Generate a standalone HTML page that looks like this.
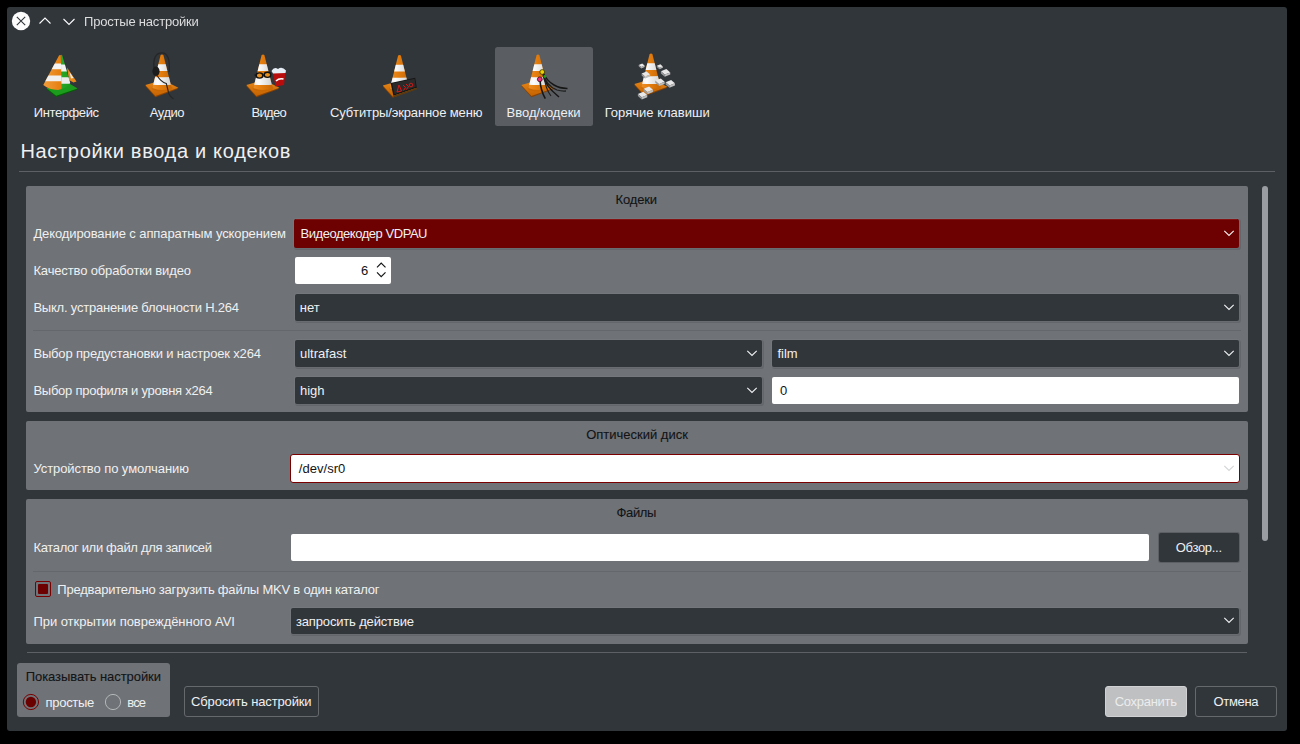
<!DOCTYPE html>
<html><head><meta charset="utf-8"><style>
html,body{margin:0;padding:0;width:1300px;height:744px;overflow:hidden;background:#000;}
.b{position:absolute;}
.t{position:absolute;white-space:pre;font-family:"Liberation Sans",sans-serif;}
</style></head><body>
<div class="b" style="left:7px;top:7px;width:1280px;height:724px;background:#31363b;border-radius:3px;"></div><svg class="b" style="left:0;top:0" width="90" height="40" viewBox="0 0 90 40">
<circle cx="21" cy="21" r="9.2" fill="#fcfcfc"/>
<path d="M16.8 16.8 L25.2 25.2 M25.2 16.8 L16.8 25.2" stroke="#31363b" stroke-width="1.1"/>
<path d="M39.5 23.5 L45 18 L50.5 23.5" stroke="#fcfcfc" stroke-width="1.1" fill="none"/>
<path d="M63.5 19 L69 24.5 L74.5 19" stroke="#fcfcfc" stroke-width="1.1" fill="none"/>
</svg><div class="b" style="left:495px;top:47px;width:98px;height:79px;background:#5a5d62;border-radius:2.5px;"></div><div class="b" style="left:19px;top:171px;width:1256px;height:1px;background:#5d6165;border-radius:0px;"></div><div class="b" style="left:26px;top:186px;width:1222px;height:226px;background:#6f7276;border-radius:2px;"></div><div class="b" style="left:26px;top:421px;width:1222px;height:69px;background:#6f7276;border-radius:2px;"></div><div class="b" style="left:26px;top:499px;width:1222px;height:145px;background:#6f7276;border-radius:2px;"></div><div class="b" style="left:1262px;top:186px;width:6px;height:355px;background:#9a9ea2;border-radius:3px;"></div><div class="b" style="left:294px;top:219px;width:945px;height:29px;background:#6d0000;border-radius:2px;box-shadow:0 0 0 1px rgba(255,255,255,0.04), 1px 1px 0 1px rgba(40,44,48,0.16)"></div><svg class="b" style="left:1221.5px;top:227.7px" width="14" height="10" viewBox="0 0 14 10"><path d="M2.3 2.8 L7 7.4 L11.7 2.8" stroke="#eff0f1" stroke-width="1.15" fill="none"/></svg><div class="b" style="left:296px;top:219px;width:941px;height:1px;background:rgba(160,40,40,0.45);border-radius:0px;"></div><div class="b" style="left:295px;top:257px;width:96px;height:27px;background:#ffffff;border-radius:2px;"></div><svg class="b" style="left:374px;top:259px" width="14" height="22" viewBox="0 0 14 22"><path d="M3 8.3 L7.2 4 L11.5 8.3 M3 13.3 L7.2 17.6 L11.5 13.3" stroke="#141618" stroke-width="1.2" fill="none"/></svg><div class="b" style="left:295px;top:294px;width:944px;height:27px;background:#31363b;border-radius:2px;box-shadow:0 0 0 1px rgba(255,255,255,0.04), 1px 1px 0 1px rgba(40,44,48,0.16)"></div><svg class="b" style="left:1221.5px;top:301.7px" width="14" height="10" viewBox="0 0 14 10"><path d="M2.3 2.8 L7 7.4 L11.7 2.8" stroke="#eff0f1" stroke-width="1.15" fill="none"/></svg><div class="b" style="left:33px;top:330px;width:1208px;height:1px;background:#64676b;border-radius:0px;"></div><div class="b" style="left:295px;top:340px;width:467px;height:27px;background:#31363b;border-radius:2px;box-shadow:0 0 0 1px rgba(255,255,255,0.04), 1px 1px 0 1px rgba(40,44,48,0.16)"></div><svg class="b" style="left:744.5px;top:347.7px" width="14" height="10" viewBox="0 0 14 10"><path d="M2.3 2.8 L7 7.4 L11.7 2.8" stroke="#eff0f1" stroke-width="1.15" fill="none"/></svg><div class="b" style="left:772px;top:340px;width:467px;height:27px;background:#31363b;border-radius:2px;box-shadow:0 0 0 1px rgba(255,255,255,0.04), 1px 1px 0 1px rgba(40,44,48,0.16)"></div><svg class="b" style="left:1221.5px;top:347.7px" width="14" height="10" viewBox="0 0 14 10"><path d="M2.3 2.8 L7 7.4 L11.7 2.8" stroke="#eff0f1" stroke-width="1.15" fill="none"/></svg><div class="b" style="left:295px;top:377px;width:467px;height:27px;background:#31363b;border-radius:2px;box-shadow:0 0 0 1px rgba(255,255,255,0.04), 1px 1px 0 1px rgba(40,44,48,0.16)"></div><svg class="b" style="left:744.5px;top:384.7px" width="14" height="10" viewBox="0 0 14 10"><path d="M2.3 2.8 L7 7.4 L11.7 2.8" stroke="#eff0f1" stroke-width="1.15" fill="none"/></svg><div class="b" style="left:772px;top:377px;width:467px;height:27px;background:#ffffff;border-radius:2px;"></div><div class="b" style="left:290px;top:454px;width:950px;height:29px;background:#ffffff;border-radius:3px;box-sizing:border-box;border:1px solid #7a0000"></div><svg class="b" style="left:1222px;top:462.5px" width="14" height="10" viewBox="0 0 14 10"><path d="M2.3 2.8 L7 7.4 L11.7 2.8" stroke="#d4d5d6" stroke-width="1.15" fill="none"/></svg><div class="b" style="left:291px;top:534px;width:858px;height:27px;background:#ffffff;border-radius:2px;"></div><div class="b" style="left:1159px;top:533px;width:80px;height:29px;background:#31363b;border-radius:2px;box-shadow:0 0 0 1px rgba(49,54,59,0.3)"></div><div class="b" style="left:33px;top:571px;width:1208px;height:1px;background:#64676b;border-radius:0px;"></div><div class="b" style="left:35px;top:581px;width:16px;height:16px;background:transparent;border-radius:2px;box-sizing:border-box;border:1px solid #7a0000"></div><div class="b" style="left:38px;top:584px;width:10px;height:10px;background:#6d0000;border-radius:1px;"></div><div class="b" style="left:291px;top:608px;width:948px;height:26px;background:#31363b;border-radius:2px;box-shadow:0 0 0 1px rgba(255,255,255,0.04), 1px 1px 0 1px rgba(40,44,48,0.16)"></div><svg class="b" style="left:1221.5px;top:615.2px" width="14" height="10" viewBox="0 0 14 10"><path d="M2.3 2.8 L7 7.4 L11.7 2.8" stroke="#eff0f1" stroke-width="1.15" fill="none"/></svg><div class="b" style="left:27px;top:652px;width:1220px;height:1px;background:#5d6165;border-radius:0px;"></div><div class="b" style="left:17px;top:663px;width:153px;height:54px;background:#6f7276;border-radius:3px;"></div><svg class="b" style="left:20px;top:692px" width="110" height="20" viewBox="0 0 110 20"><circle cx="10.9" cy="10" r="7.6" fill="none" stroke="#7a0000" stroke-width="1"/><circle cx="10.9" cy="10" r="5.2" fill="#6b0000"/><circle cx="93" cy="10" r="7.6" fill="none" stroke="#b4b6b8" stroke-width="1"/></svg><div class="b" style="left:184px;top:686px;width:135px;height:31px;background:#31363b;border-radius:3px;box-sizing:border-box;border:1px solid #66696c"></div><div class="b" style="left:1105px;top:686px;width:82px;height:31px;background:#bfc0c1;border-radius:3px;box-sizing:border-box;border:1px solid #d0d1d2"></div><div class="b" style="left:1195px;top:686px;width:82px;height:31px;background:#31363b;border-radius:3px;box-sizing:border-box;border:1px solid #66696c"></div><svg width="0" height="0" style="position:absolute">
<defs>
<linearGradient id="og" x1="0" y1="0" x2="1" y2="0">
<stop offset="0" stop-color="#f2a040"/><stop offset="0.4" stop-color="#e57e0e"/><stop offset="1" stop-color="#a65000"/>
</linearGradient>
<linearGradient id="wg" x1="0" y1="0" x2="1" y2="0">
<stop offset="0" stop-color="#e0e0e0"/><stop offset="0.35" stop-color="#fbfbfb"/><stop offset="1" stop-color="#a8a8a8"/>
</linearGradient>
<linearGradient id="bg" x1="0" y1="0" x2="0" y2="1">
<stop offset="0" stop-color="#e88a1c"/><stop offset="1" stop-color="#c46200"/>
</linearGradient>
<linearGradient id="gg" x1="0" y1="0" x2="1" y2="0">
<stop offset="0" stop-color="#40c040"/><stop offset="1" stop-color="#088008"/>
</linearGradient>
<clipPath id="cc"><path d="M16.6 3 Q18 1.8 19.4 3 L27.6 36 Q18 40 8.4 36 Z"/></clipPath>
</defs>
<g id="cone">
<path d="M1.3 34 L19 29 L34.4 36.7 L11.4 45.3 Z" fill="#8a4200"/>
<path d="M1.3 33 L19 28 L34.4 35.7 L11.4 44 Z" fill="url(#bg)"/>
<ellipse cx="18" cy="36" rx="10.5" ry="3.6" fill="#c56400" opacity="0.55"/>
<g clip-path="url(#cc)">
<rect x="0" y="0" width="40" height="44" fill="url(#og)"/>
<path d="M0 11.5 Q18 13 40 11.5 L40 18.3 Q18 19.8 0 18.3 Z" fill="url(#wg)"/>
<path d="M0 24.5 Q18 26 40 24.5 L40 32 Q18 34 0 32 Z" fill="url(#wg)"/>
</g>
</g>
</svg>
<svg class="b" style="left:42.4px;top:52px" width="48" height="48" viewBox="0 0 48 48"><defs><clipPath id="gc"><path d="M18.6 3 Q19.5 2.2 20.2 3.2 L28.2 31 Q25 36.5 18.6 36.5 Z"/></clipPath>
<clipPath id="oc"><path d="M18.8 3.2 Q17.8 2.6 17 3.6 L1.3 33 Q7 37.8 16 38 L19.6 37 Z"/></clipPath></defs>
<path d="M25 15.5 L34.5 29.5 L31.5 30.5 L27 28 Z" fill="#e8891c"/>
<path d="M27.5 20 L31.5 26 L29 26.5 Z" fill="#f0f0f0"/>
<path d="M4.6 37.3 L24 30.5 L35.6 37.5 L14.2 45 Z" fill="#045f04"/>
<path d="M4.6 36.3 L24 29.5 L35.6 36.5 L14.2 43.8 Z" fill="#1c9c1c"/>
<g clip-path="url(#gc)"><rect x="0" y="0" width="48" height="48" fill="url(#gg)"/>
<path d="M0 12.4 L48 12.4 L48 19.6 L0 19.6 Z" fill="#f2f2f2"/>
<path d="M0 25.3 L48 25.3 L48 31.7 L0 31.7 Z" fill="#ececec"/></g>
<g clip-path="url(#oc)"><rect x="0" y="0" width="48" height="48" fill="url(#og)"/>
<path d="M0 11.5 L48 11.5 L48 17.2 L0 17.2 Z" fill="#f4f4f4"/>
<path d="M0 23.6 L48 23.6 L48 29.3 L0 29.3 Z" fill="#f0f0f0"/></g></svg>
<svg class="b" style="left:143.2px;top:52px" width="48" height="48" viewBox="0 0 48 48"><use href="#cone" transform="translate(1,0)"/><path d="M11 17 Q9.5 0.8 19 0.8 Q27.5 0.8 26.2 20" stroke="#262626" stroke-width="1.3" fill="none"/>
<ellipse cx="13" cy="19.3" rx="3.6" ry="4.8" fill="#1c1c1c"/>
<path d="M14 23.5 Q18 30 23.3 31.5 Q24.5 36 25.7 41.4 Q27.5 45 30.5 47" stroke="#262626" stroke-width="1.1" fill="none"/></svg>
<svg class="b" style="left:245.0px;top:52px" width="48" height="48" viewBox="0 0 48 48"><use href="#cone" transform="translate(0,0)"/><path d="M28 21 L40.5 20 L39 33 L30.5 34.5 Z" fill="#b80c0c"/>
<path d="M26.5 19 Q29 14.5 33 17 Q37 14 41 18.5 L40.5 21 L28 21.5 Z" fill="#e6edf5"/>
<path d="M31 29 Q34 26 38.5 27" stroke="#ffffff" stroke-width="1.6" fill="none"/>
<ellipse cx="14.5" cy="23.5" rx="3.3" ry="2.6" fill="#e89020" stroke="#111" stroke-width="1.4"/>
<ellipse cx="22.5" cy="22.8" rx="3.3" ry="2.6" fill="#e89020" stroke="#111" stroke-width="1.4"/>
<path d="M9.5 23 L11.3 23.3 M17.8 23.3 L19.2 23" stroke="#111" stroke-width="1.1"/></svg>
<svg class="b" style="left:382.0px;top:52px" width="48" height="48" viewBox="0 0 48 48"><use href="#cone" transform="translate(-0.5,0.5)"/><path d="M8.6 31 L33.2 25.7 L34.8 35.7 L11.4 43.8 Z" fill="#151515"/>
<path d="M11.4 43.8 L34.8 35.7 L35 37.2 L11.8 45.3 Z" fill="#5a3a10"/>
<path d="M10 31.6 L32.6 26.8 L33.8 34.8 L12.4 42.2 Z" fill="#2a2a2a"/>
<path d="M15 40 L17 33 L19.5 39 Z M21 33 L23.5 35.5 L21.5 38.5 M24 32 L26.5 34.5 L24.5 37.5" stroke="#d81818" stroke-width="1" fill="none"/>
<circle cx="29" cy="33" r="1.8" stroke="#d81818" stroke-width="0.9" fill="none"/></svg>
<svg class="b" style="left:519.5px;top:52px" width="48" height="48" viewBox="0 0 48 48"><use href="#cone" transform="translate(0,0)"/><path d="M23 21 Q27 29 34 33 Q40 36.5 47.5 36.4" stroke="#161616" stroke-width="1.5" fill="none"/>
<path d="M23.5 21.5 Q26 34 37 38 Q42 39.5 46 39" stroke="#202020" stroke-width="1.3" fill="none"/>
<path d="M23 22 Q24 33 39 45" stroke="#161616" stroke-width="1.6" fill="none"/>
<path d="M20 28 Q20.5 38 25.3 46.7" stroke="#161616" stroke-width="1.6" fill="none"/>
<path d="M24.5 25 Q25 36 31 44" stroke="#202020" stroke-width="1.2" fill="none"/>
<circle cx="22.2" cy="20" r="2.4" fill="#f0d000" stroke="#3a3a00" stroke-width="0.8"/>
<circle cx="19.8" cy="27.3" r="2.4" fill="#e83078" stroke="#3a0010" stroke-width="0.8"/>
<circle cx="24.8" cy="24.5" r="1.4" fill="#20a020"/></svg>
<svg class="b" style="left:633.0px;top:52px" width="48" height="48" viewBox="0 0 48 48"><use href="#cone" transform="translate(0,-1)"/><g><g transform="translate(8.5,13.6) scale(0.7)"><path d="M-4 -1 L1 -3 L4.5 0 L-0.5 2 Z" fill="#e8e8e8"/><path d="M-4 -1 L-0.5 2 L-0.5 4 L-4 1 Z" fill="#9c9c9c"/><path d="M-0.5 2 L4.5 0 L4.5 2 L-0.5 4 Z" fill="#bdbdbd"/></g><g transform="translate(26.7,14.4) scale(0.7)"><path d="M-4 -1 L1 -3 L4.5 0 L-0.5 2 Z" fill="#e8e8e8"/><path d="M-4 -1 L-0.5 2 L-0.5 4 L-4 1 Z" fill="#9c9c9c"/><path d="M-0.5 2 L4.5 0 L4.5 2 L-0.5 4 Z" fill="#bdbdbd"/></g><g transform="translate(32.3,20.4) scale(1.1)"><path d="M-4 -1 L1 -3 L4.5 0 L-0.5 2 Z" fill="#e8e8e8"/><path d="M-4 -1 L-0.5 2 L-0.5 4 L-4 1 Z" fill="#9c9c9c"/><path d="M-0.5 2 L4.5 0 L4.5 2 L-0.5 4 Z" fill="#bdbdbd"/></g><g transform="translate(12.6,22.4) scale(1)"><path d="M-4 -1 L1 -3 L4.5 0 L-0.5 2 Z" fill="#e8e8e8"/><path d="M-4 -1 L-0.5 2 L-0.5 4 L-4 1 Z" fill="#9c9c9c"/><path d="M-0.5 2 L4.5 0 L4.5 2 L-0.5 4 Z" fill="#bdbdbd"/></g><g transform="translate(26.7,29.7) scale(1.1)"><path d="M-4 -1 L1 -3 L4.5 0 L-0.5 2 Z" fill="#e8e8e8"/><path d="M-4 -1 L-0.5 2 L-0.5 4 L-4 1 Z" fill="#9c9c9c"/><path d="M-0.5 2 L4.5 0 L4.5 2 L-0.5 4 Z" fill="#bdbdbd"/></g><g transform="translate(37,31.3) scale(1.1)"><path d="M-4 -1 L1 -3 L4.5 0 L-0.5 2 Z" fill="#e8e8e8"/><path d="M-4 -1 L-0.5 2 L-0.5 4 L-4 1 Z" fill="#9c9c9c"/><path d="M-0.5 2 L4.5 0 L4.5 2 L-0.5 4 Z" fill="#bdbdbd"/></g><g transform="translate(15,37.8) scale(1.1)"><path d="M-4 -1 L1 -3 L4.5 0 L-0.5 2 Z" fill="#e8e8e8"/><path d="M-4 -1 L-0.5 2 L-0.5 4 L-4 1 Z" fill="#9c9c9c"/><path d="M-0.5 2 L4.5 0 L4.5 2 L-0.5 4 Z" fill="#bdbdbd"/></g><g transform="translate(9.3,43) scale(1.1)"><path d="M-4 -1 L1 -3 L4.5 0 L-0.5 2 Z" fill="#e8e8e8"/><path d="M-4 -1 L-0.5 2 L-0.5 4 L-4 1 Z" fill="#9c9c9c"/><path d="M-0.5 2 L4.5 0 L4.5 2 L-0.5 4 Z" fill="#bdbdbd"/></g></g></svg><div class="t" style="left:83.6px;top:15.20px;font-size:13px;line-height:13px;color:#dcdddd;letter-spacing:-0.199px;will-change:transform;">Простые настройки</div><div class="t" style="left:33.8px;top:106.00px;font-size:13px;line-height:13px;color:#eff0f1;letter-spacing:-0.411px;">Интерфейс</div><div class="t" style="left:149.8px;top:106.00px;font-size:13px;line-height:13px;color:#eff0f1;letter-spacing:-0.468px;">Аудио</div><div class="t" style="left:251.4px;top:106.00px;font-size:13px;line-height:13px;color:#eff0f1;letter-spacing:-0.646px;">Видео</div><div class="t" style="left:330.0px;top:106.00px;font-size:13px;line-height:13px;color:#eff0f1;letter-spacing:-0.126px;">Субтитры/экранное меню</div><div class="t" style="left:506.6px;top:106.00px;font-size:13px;line-height:13px;color:#eff0f1;letter-spacing:-0.013px;">Ввод/кодеки</div><div class="t" style="left:604.7px;top:106.00px;font-size:13px;line-height:13px;color:#eff0f1;letter-spacing:0.006px;">Горячие клавиши</div><div class="t" style="left:20.4px;top:141.07px;font-size:20px;line-height:20px;color:#eff0f1;letter-spacing:0.684px;">Настройки ввода и кодеков</div><div class="t" style="left:615.5px;top:193.00px;font-size:13px;line-height:13px;color:#121416;letter-spacing:-0.159px;-webkit-text-stroke:0.1px #121416;">Кодеки</div><div class="t" style="left:586.2px;top:428.00px;font-size:13px;line-height:13px;color:#121416;letter-spacing:-0.002px;-webkit-text-stroke:0.1px #121416;">Оптический диск</div><div class="t" style="left:616.6px;top:506.00px;font-size:13px;line-height:13px;color:#121416;letter-spacing:-0.378px;-webkit-text-stroke:0.1px #121416;">Файлы</div><div class="t" style="left:33.4px;top:226.50px;font-size:13px;line-height:13px;color:#eff0f1;letter-spacing:-0.101px;">Декодирование с аппаратным ускорением</div><div class="t" style="left:33.4px;top:264.40px;font-size:13px;line-height:13px;color:#eff0f1;letter-spacing:-0.141px;">Качество обработки видео</div><div class="t" style="left:33.4px;top:300.50px;font-size:13px;line-height:13px;color:#eff0f1;letter-spacing:-0.218px;">Выкл. устранение блочности H.264</div><div class="t" style="left:33.4px;top:347.40px;font-size:13px;line-height:13px;color:#eff0f1;letter-spacing:-0.160px;">Выбор предустановки и настроек x264</div><div class="t" style="left:33.4px;top:384.30px;font-size:13px;line-height:13px;color:#eff0f1;letter-spacing:-0.252px;">Выбор профиля и уровня x264</div><div class="t" style="left:33.4px;top:462.00px;font-size:13px;line-height:13px;color:#eff0f1;letter-spacing:-0.074px;">Устройство по умолчанию</div><div class="t" style="left:33.4px;top:541.00px;font-size:13px;line-height:13px;color:#eff0f1;letter-spacing:-0.322px;">Каталог или файл для записей</div><div class="t" style="left:57.3px;top:582.50px;font-size:13px;line-height:13px;color:#eff0f1;letter-spacing:-0.203px;">Предварительно загрузить файлы MKV в один каталог</div><div class="t" style="left:33.4px;top:615.00px;font-size:13px;line-height:13px;color:#eff0f1;letter-spacing:-0.034px;">При открытии повреждённого AVI</div><div class="t" style="left:300.5px;top:227.00px;font-size:13px;line-height:13px;color:#eff0f1;letter-spacing:-0.458px;">Видеодекодер VDPAU</div><div class="t" style="left:361.0px;top:263.60px;font-size:13px;line-height:13px;color:#101214;letter-spacing:0.000px;">6</div><div class="t" style="left:299.8px;top:301.00px;font-size:13px;line-height:13px;color:#eff0f1;letter-spacing:0.000px;">нет</div><div class="t" style="left:300.0px;top:346.60px;font-size:13px;line-height:13px;color:#eff0f1;letter-spacing:0.000px;">ultrafast</div><div class="t" style="left:300.0px;top:383.60px;font-size:13px;line-height:13px;color:#eff0f1;letter-spacing:0.000px;">high</div><div class="t" style="left:777.4px;top:346.60px;font-size:13px;line-height:13px;color:#eff0f1;letter-spacing:0.000px;">film</div><div class="t" style="left:780.0px;top:383.60px;font-size:13px;line-height:13px;color:#121416;letter-spacing:0.000px;">0</div><div class="t" style="left:298.8px;top:461.80px;font-size:13px;line-height:13px;color:#121416;letter-spacing:0.036px;">/dev/sr0</div><div class="t" style="left:1175.8px;top:541.00px;font-size:13px;line-height:13px;color:#eff0f1;letter-spacing:-0.313px;">Обзор...</div><div class="t" style="left:296.0px;top:615.00px;font-size:13px;line-height:13px;color:#eff0f1;letter-spacing:-0.161px;">запросить действие</div><div class="t" style="left:25.7px;top:670.20px;font-size:13px;line-height:13px;color:#121416;letter-spacing:-0.064px;-webkit-text-stroke:0.1px #121416;">Показывать настройки</div><div class="t" style="left:45.6px;top:696.30px;font-size:13px;line-height:13px;color:#eff0f1;letter-spacing:-0.305px;">простые</div><div class="t" style="left:127.3px;top:696.30px;font-size:13px;line-height:13px;color:#eff0f1;letter-spacing:-0.900px;">все</div><div class="t" style="left:191.0px;top:694.50px;font-size:13px;line-height:13px;color:#eff0f1;letter-spacing:-0.138px;">Сбросить настройки</div><div class="t" style="left:1114.7px;top:694.50px;font-size:13px;line-height:13px;color:#eceded;letter-spacing:-0.289px;">Сохранить</div><div class="t" style="left:1213.5px;top:694.50px;font-size:13px;line-height:13px;color:#eff0f1;letter-spacing:-0.331px;">Отмена</div>
</body></html>
